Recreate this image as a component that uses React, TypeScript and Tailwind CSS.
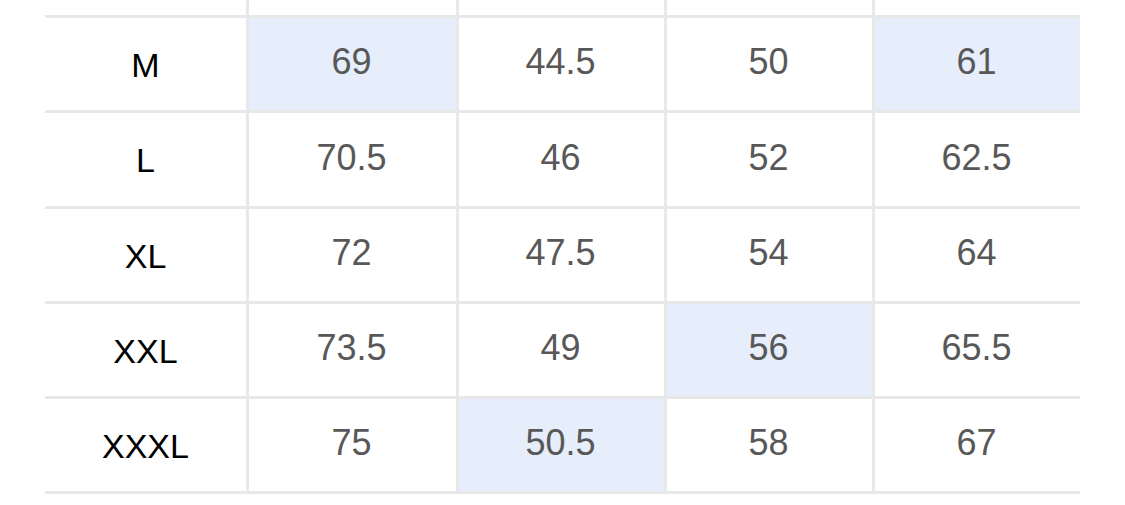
import React from "react";

const rows: { label: string; vals: string[]; hl: number[] }[] = [
  { label: "", vals: ["", "", "", ""], hl: [] },
  { label: "M", vals: ["69", "44.5", "50", "61"], hl: [0, 3] },
  { label: "L", vals: ["70.5", "46", "52", "62.5"], hl: [] },
  { label: "XL", vals: ["72", "47.5", "54", "64"], hl: [] },
  { label: "XXL", vals: ["73.5", "49", "56", "65.5"], hl: [2] },
  { label: "XXXL", vals: ["75", "50.5", "58", "67"], hl: [1] },
];

const heights = ["h-[15px]", "h-[92px]", "h-[93px]", "h-[92px]", "h-[92px]", "h-[92px]"];

export default function App() {
  return (
    <div className="w-[1125px] h-[505px] bg-white overflow-hidden" style={{ fontFamily: '"Liberation Sans", Arial, sans-serif' }}>
      <div className="ml-[45px] w-[1035px] bg-[#e8e8e8] pb-[3px] grid grid-cols-[201px_207px_205px_205px_205px] gap-[3px]">
        {rows.map((r, i) => (
          <React.Fragment key={i}>
            <div className={`${heights[i]} bg-white flex items-center justify-center pt-[2px] text-[34px] text-black`}>
              {r.label}
            </div>
            {r.vals.map((v, j) => (
              <div
                key={j}
                className={`${heights[i]} ${r.hl.includes(j) ? "bg-[#e6edfb]" : "bg-white"} flex items-center justify-center pb-[4px] pr-[2px] text-[36px] text-[#585858]`}
              >
                {v}
              </div>
            ))}
          </React.Fragment>
        ))}
      </div>
    </div>
  );
}
